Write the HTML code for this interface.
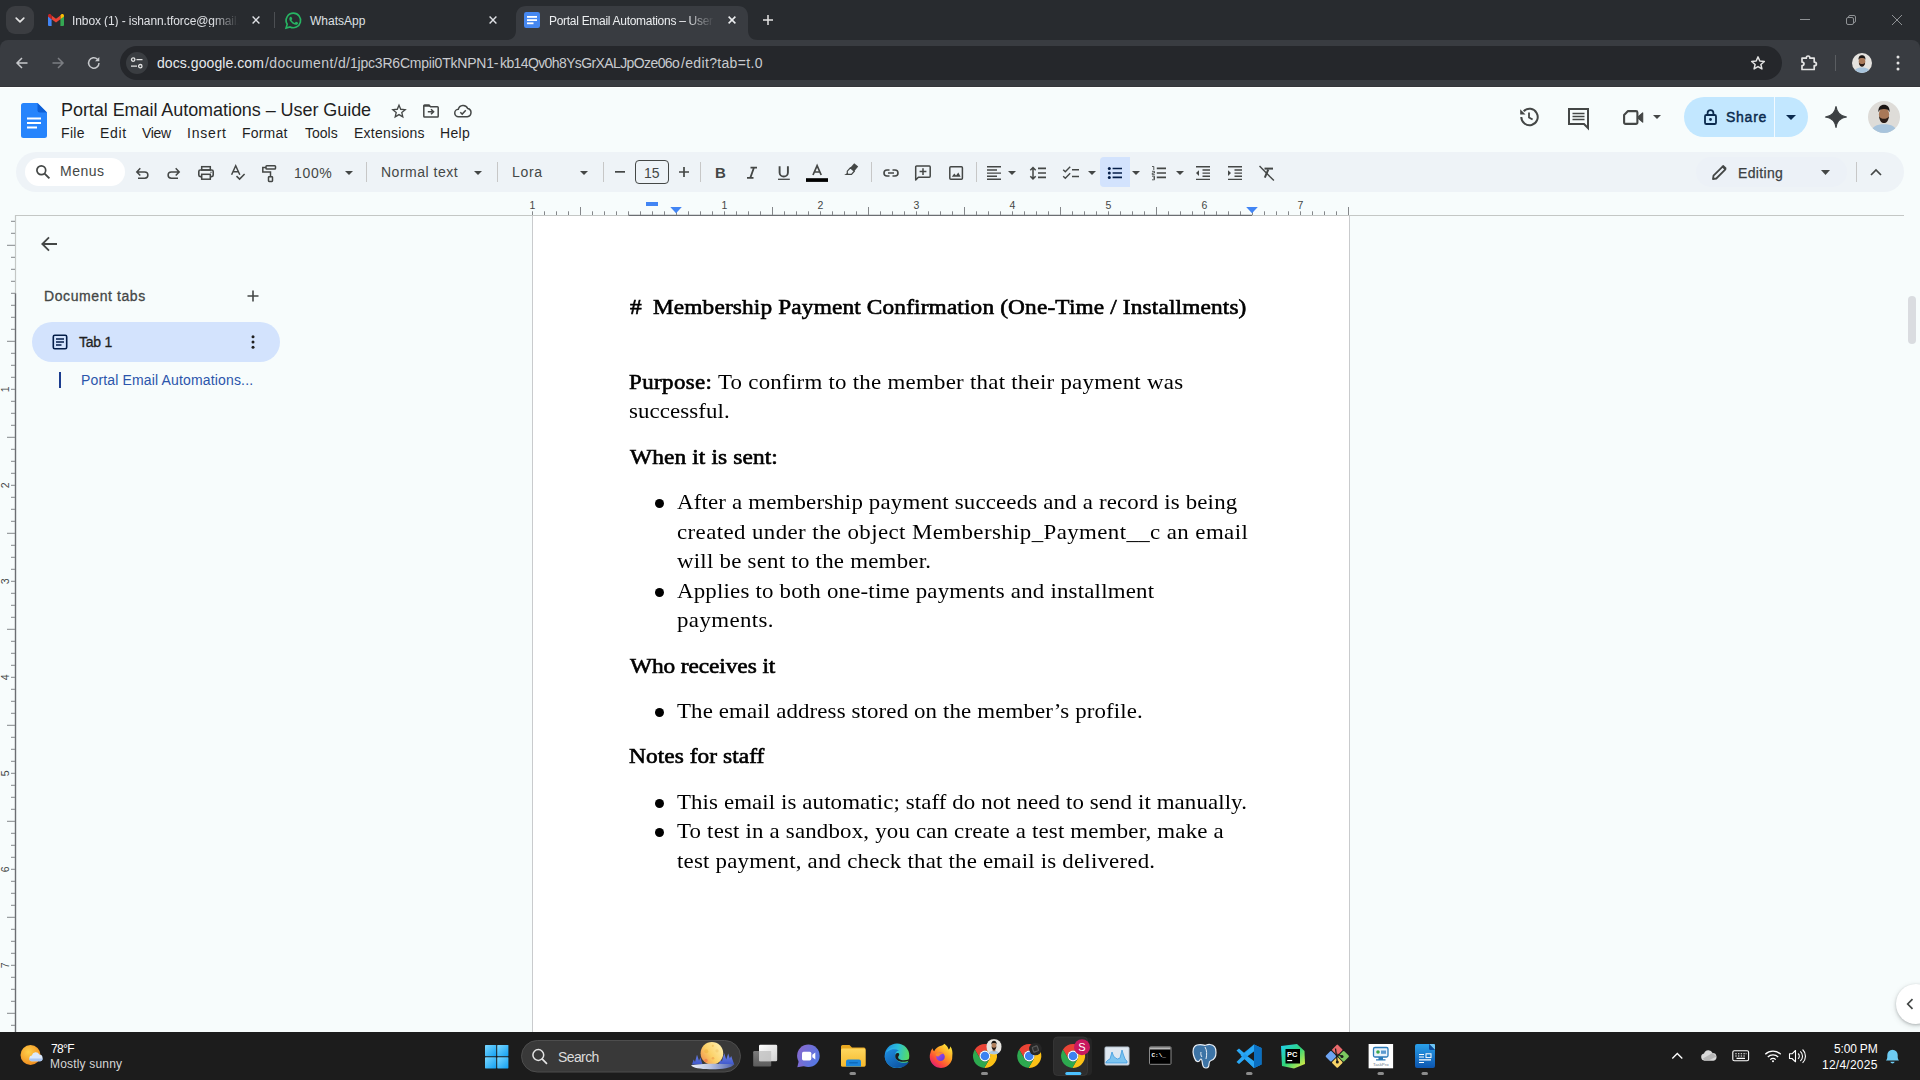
<!DOCTYPE html>
<html lang="en">
<head>
<meta charset="utf-8">
<title>Portal Email Automations – User Guide - Google Docs</title>
<style>
*{box-sizing:border-box;margin:0;padding:0}
html,body{width:1920px;height:1080px;overflow:hidden;background:#f7fcfc}
body{position:relative;font-family:"Liberation Sans",sans-serif;color:#1f1f1f}
.abs{position:absolute}
.t{position:absolute;white-space:nowrap;line-height:1}
svg{position:absolute;overflow:visible}

/* ---------- Chrome browser frame ---------- */
#tabstrip{position:absolute;left:0;top:0;width:1920px;height:52px;background:#282b2f}
#navbar{position:absolute;left:0;top:40px;width:1920px;height:47px;background:#393c41;border-bottom:1px solid #34363a;border-radius:8px 8px 0 0}
#omni{position:absolute;left:120px;top:46px;width:1662px;height:34px;border-radius:17px;background:#25272b}
.ctab{color:#e3e3e3;font-size:12px}

/* ---------- Docs ---------- */
#docs{position:absolute;left:0;top:87px;width:1920px;height:945px;background:#f7fcfc;border-top:1px solid #fff}
#tb{position:absolute;left:16px;top:152px;width:1888px;height:40px;border-radius:20px;background:#eef3f7}
.menu{font-size:14px;color:#1f1f1f}
.tbtxt{font-size:14px;color:#444746}
.sep{position:absolute;width:1px;height:20px;top:162px;background:#c7c7c7}

/* document text */
.d{position:absolute;white-space:nowrap;font-family:"Liberation Serif",serif;font-size:22px;line-height:26px;color:#000}
.d b{font-weight:400;-webkit-text-stroke:.65px #000}
.db{transform-origin:0 50%;transform:scaleX(1.06)}
.dr{transform-origin:0 50%;transform:scaleX(1.04)}
.bul{position:absolute;width:9px;height:9px;border-radius:50%;background:#000;left:654.5px}

/* ---------- Taskbar ---------- */
#taskbar{position:absolute;left:0;top:1032px;width:1920px;height:48px;background:#1c1c1c}
.tk{color:#fff;font-size:12px}
</style>
</head>
<body>

<!-- ================= CHROME ================= -->
<div id="tabstrip"></div>
<div id="navbar"></div>
<div id="omni"></div>
<!--CHROME-->

<!-- tab search -->
<div class="abs" style="left:6px;top:6px;width:28px;height:28px;border-radius:9px;background:#3b3d41"></div>
<svg style="left:14px;top:14px" width="12" height="12" viewBox="0 0 12 12"><path d="M2.2 4.2 L6 7.8 L9.8 4.2" fill="none" stroke="#e3e3e3" stroke-width="1.7" stroke-linecap="round" stroke-linejoin="round"/></svg>
<!-- gmail favicon -->
<svg style="left:48px;top:14px" width="16" height="12" viewBox="0 0 16 12"><path d="M0 1.6V11a1 1 0 0 0 1 1h2.6V5.2z" fill="#4285f4"/><path d="M12.4 12H15a1 1 0 0 0 1-1V1.6l-3.6 3.6z" fill="#34a853"/><path d="M12.4 1.4V5.2L16 2.5V1.6C16 .2 14.4-.5 13.3.3z" fill="#fbbc04"/><path d="M3.6 5.2V1.4L8 4.7l4.4-3.3v3.8L8 8.5z" fill="#ea4335"/><path d="M0 1.6v.9l3.6 2.7V1.4L2.7.3C1.6-.5 0 .2 0 1.6z" fill="#c5221f"/></svg>
<div class="t ctab" id="ct1" style="left:72px;top:15px;letter-spacing:-0.1px;color:#dfe1e5;width:167px;overflow:hidden;-webkit-mask-image:linear-gradient(90deg,#000 84%,transparent 100%);mask-image:linear-gradient(90deg,#000 84%,transparent 100%)">Inbox (1) - ishann.tforce@gmail.com - Gmail</div>
<svg style="left:252px;top:16px" width="8" height="8" viewBox="0 0 8 8"><path d="M.6.6 7.4 7.4M7.4.6.6 7.4" stroke="#dfe1e5" stroke-width="1.4" fill="none"/></svg>
<div class="abs" style="left:274px;top:12px;width:1px;height:16px;background:#4c4f53"></div>
<!-- whatsapp favicon -->
<svg style="left:285px;top:12px" width="17" height="17" viewBox="0 0 24 24"><path d="M12 1.6A10.3 10.3 0 0 0 3.1 17.2L1.5 22.6l5.6-1.5A10.3 10.3 0 1 0 12 1.6z" fill="none" stroke="#27b463" stroke-width="2.3"/><path d="M8.6 6.9c-.3-.6-.5-.6-.8-.6h-.7c-.3 0-.7.1-1 .5-.4.4-1.300 1.300-1.300 3.100s1.300 3.600 1.500 3.800c.2.300 2.600 4.100 6.400 5.600 3.100 1.200 3.800 1 4.400.9.700-.1 2.200-.9 2.500-1.800.3-.9.300-1.600.2-1.800-.1-.2-.3-.2-.7-.400l-2.500-1.200c-.400-.100-.600-.200-.900.200l-1.200 1.500c-.2.200-.4.300-.8.100-.4-.2-1.600-.6-3-1.900-1.100-1-1.900-2.200-2.100-2.600-.2-.4 0-.6.200-.8l.6-.7c.2-.2.200-.4.400-.6.100-.3 0-.5 0-.7z" fill="#27b463" transform="translate(2.2 1.6) scale(.82)"/></svg>
<div class="t ctab" id="ct2" style="top:15px;color:#dfe1e5;left:310px;letter-spacing:0px">WhatsApp</div>
<svg style="left:489px;top:16px" width="8" height="8" viewBox="0 0 8 8"><path d="M.6.6 7.4 7.4M7.4.6.6 7.4" stroke="#dfe1e5" stroke-width="1.4" fill="none"/></svg>
<!-- active tab -->
<svg style="left:506px;top:6px" width="252" height="34" viewBox="0 0 252 34"><path d="M0 34 C6 34 10 31 10 24 V10 C10 4 14 0 20 0 H232 C238 0 242 4 242 10 V24 C242 31 246 34 252 34 Z" fill="#393c41"/></svg>
<svg style="left:524px;top:12px" width="16" height="16" viewBox="0 0 16 16"><rect width="16" height="16" rx="2.2" fill="#4688f1"/><rect x="3" y="4" width="10" height="1.8" fill="#fff"/><rect x="3" y="7.2" width="10" height="1.8" fill="#fff"/><rect x="3" y="10.400" width="6.5" height="1.8" fill="#fff"/></svg>
<div class="t ctab" id="ct3" style="left:549px;top:15px;letter-spacing:-0.29px;color:#eceef0;width:167px;overflow:hidden;-webkit-mask-image:linear-gradient(90deg,#000 82%,transparent 99%);mask-image:linear-gradient(90deg,#000 82%,transparent 99%)">Portal Email Automations – User Guide - Google Docs</div>
<svg style="left:728px;top:16px" width="8" height="8" viewBox="0 0 8 8"><path d="M.6.6 7.4 7.4M7.4.6.6 7.4" stroke="#eceef0" stroke-width="1.5" fill="none"/></svg>
<svg style="left:763px;top:15px" width="10" height="10" viewBox="0 0 10 10"><path d="M5 0V10M0 5H10" stroke="#e3e3e3" stroke-width="1.5" fill="none"/></svg>
<!-- window controls -->
<svg style="left:1800px;top:19px" width="10" height="1" viewBox="0 0 10 1"><rect width="10" height="1" fill="#8f9295"/></svg>
<svg style="left:1846px;top:15px" width="10" height="10" viewBox="0 0 10 10"><rect x=".5" y="2.500" width="7" height="7" rx="1.5" fill="none" stroke="#8f9295"/><path d="M2.5 2.300V2A1.500 1.500 0 0 1 4 .5H8A1.500 1.500 0 0 1 9.500 2V6A1.500 1.500 0 0 1 8 7.500H7.700" fill="none" stroke="#8f9295"/></svg>
<svg style="left:1892px;top:15px" width="10" height="10" viewBox="0 0 10 10"><path d="M0 0 10 10M10 0 0 10" stroke="#8f9295" stroke-width="1" fill="none"/></svg>
<!-- nav buttons -->
<svg style="left:16px;top:57px" width="12" height="12" viewBox="0 0 12 12"><path d="M11.500 6H1.200M6 1 1 6l5 5" fill="none" stroke="#c7c9cc" stroke-width="1.500" stroke-linejoin="miter"/></svg>
<svg style="left:52px;top:57px" width="12" height="12" viewBox="0 0 12 12"><path d="M.5 6H10.800M6 1l5 5-5 5" fill="none" stroke="#7b7e82" stroke-width="1.500"/></svg>
<svg style="left:87px;top:56px" width="14" height="14" viewBox="0 0 14 14"><path d="M12 7A5.200 5.200 0 1 1 10.400 3.200" fill="none" stroke="#c7c9cc" stroke-width="1.500"/><path d="M12.300 1V5.300H8z" fill="#c7c9cc"/></svg>
<!-- site info -->
<div class="abs" style="left:126px;top:52px;width:22px;height:22px;border-radius:11px;background:#3a3d41"></div>
<svg style="left:130px;top:57px" width="14" height="12" viewBox="0 0 14 12"><circle cx="3.200" cy="2.600" r="1.700" fill="none" stroke="#e3e3e3" stroke-width="1.300"/><path d="M6.500 2.600H12.500M1 9.200H7" stroke="#e3e3e3" stroke-width="1.300"/><circle cx="10.300" cy="9.200" r="1.700" fill="none" stroke="#e3e3e3" stroke-width="1.300"/></svg>
<div class="t" id="url" style="left:157px;top:56px;font-size:14px"><span style="display:inline-block;letter-spacing:0.071px;color:#e8eaed;width:108px">docs.google.com</span><span style="display:inline-block;letter-spacing:0.364px;color:#c9cbcf;width:85px">/document/d/</span><span style="display:inline-block;letter-spacing:-0.211px;color:#c9cbcf;width:150px">1jpc3R6Cmpii0TkNPN1-</span><span style="display:inline-block;letter-spacing:-0.609px;color:#c9cbcf;width:181px">kb14Qv0h8YsGrXALJpOze06o</span><span style="display:inline-block;letter-spacing:0.333px;color:#c9cbcf">/edit?tab=t.0</span></div>
<!-- star -->
<svg style="left:1750px;top:55px" width="16" height="16" viewBox="0 0 24 24"><path d="M12 2.800l2.700 6.300 6.800.6-5.200 4.500 1.600 6.700L12 17.300 6.100 20.900l1.600-6.700L2.500 9.700l6.800-.6z" fill="none" stroke="#e3e3e3" stroke-width="2.200" stroke-linejoin="round"/></svg>
<!-- extensions -->
<svg style="left:1800px;top:54px" width="18" height="17" viewBox="0 0 18 17"><path d="M2 4.200H6.300C6.300 2.900 7 2 8.100 2s1.800.9 1.800 2.200H14.200V8.100C15.500 8.100 16.400 8.800 16.400 9.900s-.9 1.800-2.200 1.800V15.500H2V11.500C3.300 11.500 4 10.800 4 9.800S3.300 8.100 2 8.100z" fill="none" stroke="#e3e3e3" stroke-width="1.700" stroke-linejoin="round"/></svg>
<div class="abs" style="left:1835px;top:55px;width:1px;height:16px;background:#5a5d61"></div>
<!-- profile avatar -->
<svg style="left:1852px;top:53px" width="20" height="20" viewBox="0 0 20 20"><defs><clipPath id="av1"><circle cx="10" cy="10" r="10"/></clipPath></defs><g clip-path="url(#av1)"><rect width="20" height="20" fill="#e4e2de"/><path d="M2 20c0-4 3.500-5.500 8-5.500s8 1.500 8 5.500z" fill="#a8c4dc"/><ellipse cx="10" cy="8.500" rx="3.300" ry="4.300" fill="#a87858"/><path d="M6.500 7C6.300 3.500 8 2.300 10 2.300S13.700 3.500 13.500 7C13 5.500 12 5 10 5S7 5.500 6.500 7z" fill="#1c1614"/><path d="M6.900 9.500c.3 3 1.600 4.300 3.100 4.300s2.800-1.300 3.100-4.300c-.8 1.300-1.800 1.600-3.100 1.600S7.700 10.800 6.900 9.500z" fill="#2a1d18"/></g></svg>
<!-- kebab -->
<svg style="left:1896px;top:55px" width="4" height="16" viewBox="0 0 4 16"><circle cx="2" cy="2" r="1.500" fill="#e3e3e3"/><circle cx="2" cy="8" r="1.500" fill="#e3e3e3"/><circle cx="2" cy="14" r="1.500" fill="#e3e3e3"/></svg>


<!-- ================= DOCS ================= -->
<div id="docs"></div>
<!--DOCSHEAD-->

<!-- docs logo -->
<svg style="left:21px;top:103px" width="26" height="35" viewBox="0 0 26 35"><path d="M2.500 0H16.500L26 9.500V32.500A2.500 2.500 0 0 1 23.500 35H2.500A2.500 2.500 0 0 1 0 32.500V2.500A2.500 2.500 0 0 1 2.500 0z" fill="#2684fc"/><path d="M16.500 0 26 9.500H18.800A2.300 2.300 0 0 1 16.500 7.200z" fill="#0d5fd6"/><rect x="6" y="14.500" width="14" height="2" fill="#fff"/><rect x="6" y="19" width="14" height="2" fill="#fff"/><rect x="6" y="23.500" width="10" height="2" fill="#fff"/></svg>
<div class="t" id="title" style="top:101px;font-size:18px;color:#1f1f1f;left:61px;letter-spacing:-0.056px">Portal Email Automations – User Guide</div>
<!-- star / move / cloud -->
<svg style="left:391px;top:103px" width="16" height="16" viewBox="0 0 24 24"><path d="M12 3.200l2.600 6.200 6.700.6-5.100 4.400 1.500 6.500L12 17.400 6.300 20.900l1.500-6.500L2.700 10l6.700-.6z" fill="none" stroke="#444746" stroke-width="2" stroke-linejoin="miter"/></svg>
<svg style="left:423px;top:104px" width="16" height="14" viewBox="0 0 16 14"><path d="M1.600 1H6l1.500 1.700H14.400a.8.800 0 0 1 .8.800V12.200a.8.800 0 0 1-.8.800H1.600a.8.800 0 0 1-.8-.8V1.800A.8.800 0 0 1 1.600 1z" fill="none" stroke="#444746" stroke-width="1.500"/><path d="M.8 1H6.300L7.600 2.700H.8z" fill="#444746"/><path d="M4.800 7.800H9.500M8 5.300 10.600 7.800 8 10.300" fill="none" stroke="#444746" stroke-width="1.500"/></svg>
<svg style="left:454px;top:104px" width="18" height="14" viewBox="0 0 18 14"><path d="M4.600 12.700A3.700 3.700 0 0 1 4.300 5.300 4.900 4.900 0 0 1 13.700 4.600 4.100 4.100 0 0 1 13.300 12.700z" fill="none" stroke="#444746" stroke-width="1.500" stroke-linejoin="round"/><path d="M6.300 8.300 8.200 10.100 11.800 6.300" fill="none" stroke="#444746" stroke-width="1.500"/></svg>
<!-- menus -->
<div class="t menu" id="m1" style="top:126px;left:61px;letter-spacing:0.333px">File</div>
<div class="t menu" id="m2" style="top:126px;left:100px;letter-spacing:0.667px">Edit</div>
<div class="t menu" id="m3" style="top:126px;left:142px;letter-spacing:-0.333px">View</div>
<div class="t menu" id="m4" style="top:126px;left:187px;letter-spacing:0.8px">Insert</div>
<div class="t menu" id="m5" style="top:126px;left:242px;letter-spacing:0.2px">Format</div>
<div class="t menu" id="m6" style="top:126px;left:305px;letter-spacing:0px">Tools</div>
<div class="t menu" id="m7" style="top:126px;left:354px;letter-spacing:0.222px">Extensions</div>
<div class="t menu" id="m8" style="top:126px;left:440px;letter-spacing:0.333px">Help</div>
<!-- history -->
<svg style="left:1518px;top:106px" width="22" height="22" viewBox="0 0 22 22"><path d="M3.300 11A8.200 8.200 0 1 0 5.700 5.200" fill="none" stroke="#444746" stroke-width="2"/><path d="M2.200 3.300V8.600H7.500z" fill="#444746"/><path d="M11 6.500V11.400L14.600 13.600" fill="none" stroke="#444746" stroke-width="1.800"/></svg>
<!-- comments -->
<svg style="left:1568px;top:108px" width="21" height="21" viewBox="0 0 21 21"><path d="M1 1H20V20L16 16H1z" fill="none" stroke="#444746" stroke-width="2" stroke-linejoin="miter"/><path d="M4.500 5.500H16.500M4.500 8.500H16.500M4.500 11.500H16.500" stroke="#444746" stroke-width="1.700"/></svg>
<!-- meet -->
<svg style="left:1623px;top:110px" width="21" height="15" viewBox="0 0 21 15"><path d="M5 1.100H13A1.400 1.400 0 0 1 14.400 2.500V12.500A1.400 1.400 0 0 1 13 13.900H2.500A1.400 1.400 0 0 1 1.100 12.500V5z" fill="none" stroke="#444746" stroke-width="2.100" stroke-linejoin="round"/><path d="M15.300 6.600 19.700 2.800V12.200L15.300 8.400z" fill="#444746" stroke="#444746" stroke-width="1.100" stroke-linejoin="round"/></svg>
<svg style="left:1653px;top:115px" width="8" height="4" viewBox="0 0 8 4"><path d="M0 0H8L4 4z" fill="#444746"/></svg>
<!-- share -->
<div class="abs" style="left:1684px;top:97px;width:124px;height:40px;border-radius:20px;background:#c2e7ff"></div>
<div class="abs" style="left:1774px;top:97px;width:1px;height:40px;background:#f3faff"></div>
<svg style="left:1704px;top:109px" width="13" height="16" viewBox="0 0 13 16"><rect x="1" y="6" width="11" height="9" rx="1.300" fill="none" stroke="#0b2a4e" stroke-width="1.800"/><path d="M3.600 6V4.100A2.900 2.900 0 0 1 9.400 4.100V6" fill="none" stroke="#0b2a4e" stroke-width="1.800"/><circle cx="6.500" cy="10.500" r="1.400" fill="#0b2a4e"/></svg>
<div class="t" id="share" style="top:110px;font-size:14px;font-weight:400;-webkit-text-stroke:.45px #0b2a4e;color:#0b2a4e;left:1726px;letter-spacing:0.75px">Share</div>
<svg style="left:1786px;top:115px" width="10" height="5" viewBox="0 0 10 5"><path d="M0 0H10L5 5z" fill="#0b2a4e"/></svg>
<!-- gemini spark -->
<svg style="left:1825px;top:106px" width="22" height="22" viewBox="0 0 22 22"><path d="M11 .5C11.800 6.500 15.500 10.200 21.500 11 15.500 11.800 11.800 15.500 11 21.500 10.200 15.500 6.500 11.800 .5 11 6.500 10.200 10.200 6.500 11 .5z" fill="#3c4043" stroke="#3c4043" stroke-width="1.200" stroke-linejoin="round"/></svg>
<!-- account avatar -->
<svg style="left:1868px;top:101px" width="32" height="32" viewBox="0 0 20 20"><defs><clipPath id="av2"><circle cx="10" cy="10" r="10"/></clipPath></defs><g clip-path="url(#av2)"><rect width="20" height="20" fill="#dedcd8"/><path d="M2 20c0-4 3.500-5.500 8-5.500s8 1.500 8 5.500z" fill="#a8c4dc"/><ellipse cx="10" cy="8.500" rx="3.200" ry="4.300" fill="#a87858"/><path d="M6.500 7C6.300 3.500 8 2.300 10 2.300S13.700 3.500 13.500 7C13 5.500 12 5 10 5S7 5.500 6.500 7z" fill="#1c1614"/><path d="M6.900 9.500c.3 3 1.600 4.300 3.100 4.300s2.800-1.300 3.100-4.300c-.8 1.300-1.800 1.600-3.100 1.600S7.700 10.800 6.900 9.500z" fill="#2a1d18"/></g></svg>

<div id="tb"></div>
<!--TOOLBAR-->

<!-- menus search -->
<div class="abs" style="left:25px;top:158px;width:100px;height:28px;border-radius:14px;background:#fff"></div>
<svg style="left:35px;top:164px" width="16" height="16" viewBox="0 0 16 16"><circle cx="6.300" cy="6.300" r="4.400" fill="none" stroke="#444746" stroke-width="1.700"/><path d="M9.600 9.600 14.400 14.400" stroke="#444746" stroke-width="1.900"/></svg>
<div class="t tbtxt" id="tmenus" style="top:164px;left:60px;letter-spacing:0.5px">Menus</div>
<!-- undo / redo -->
<svg style="left:134px;top:165px" width="16" height="16" viewBox="134 165 16 16"><path d="M140.300 168.300 136.800 171.900 140.300 175.500M137 171.900H144.700A3.200 3.200 0 0 1 144.700 178.300H138" fill="none" stroke="#444746" stroke-width="1.500"/></svg>
<svg style="left:166px;top:165px" width="16" height="16" viewBox="166 165 16 16"><path d="M175.700 168.300 179.200 171.900 175.700 175.500M179 171.900H171.300A3.200 3.200 0 0 0 171.300 178.300H178" fill="none" stroke="#444746" stroke-width="1.500"/></svg>
<!-- print -->
<svg style="left:197px;top:165px" width="18" height="16" viewBox="197 165 18 16"><rect x="198.800" y="170" width="14.400" height="6.600" rx="1.600" fill="none" stroke="#444746" stroke-width="1.600"/><rect x="201.700" y="166.700" width="8.600" height="3.300" fill="none" stroke="#444746" stroke-width="1.500"/><rect x="201.700" y="174.300" width="8.600" height="4.900" fill="#eef3f7" stroke="#444746" stroke-width="1.500"/><circle cx="211" cy="172.300" r=".7" fill="#444746"/></svg>
<!-- spellcheck -->
<svg style="left:230px;top:164px" width="17" height="17" viewBox="230 164 17 17"><path d="M231.600 174.700 235.700 165.700 239.800 174.700M233.100 171.800H238.300" fill="none" stroke="#444746" stroke-width="1.500" stroke-linejoin="miter"/><path d="M236.500 176.100 239.600 179.100 244.600 174" fill="none" stroke="#444746" stroke-width="1.500"/></svg>
<!-- paint format -->
<svg style="left:261px;top:164px" width="17" height="19" viewBox="261 164 17 19"><rect x="266" y="165.700" width="9.500" height="3.300" rx=".8" fill="none" stroke="#444746" stroke-width="1.500"/><path d="M266 167.400H262.800V172H270.500V176.300" fill="none" stroke="#444746" stroke-width="1.500"/><rect x="268.500" y="176.700" width="4" height="4.700" rx=".6" fill="none" stroke="#444746" stroke-width="1.500"/></svg>
<!-- zoom -->
<div class="t tbtxt" id="tzoom" style="top:166px;left:294px;letter-spacing:0.667px">100%</div>
<svg style="left:345px;top:171px" width="8" height="4" viewBox="0 0 8 4"><path d="M0 0H8L4 4z" fill="#444746"/></svg>
<div class="sep" style="left:366px"></div>
<div class="t tbtxt" id="tstyle" style="top:165px;left:381px;letter-spacing:0.5px">Normal text</div>
<svg style="left:474px;top:171px" width="8" height="4" viewBox="0 0 8 4"><path d="M0 0H8L4 4z" fill="#444746"/></svg>
<div class="sep" style="left:497px"></div>
<div class="t tbtxt" id="tfont" style="top:165px;left:512px;letter-spacing:0.667px">Lora</div>
<svg style="left:580px;top:171px" width="8" height="4" viewBox="0 0 8 4"><path d="M0 0H8L4 4z" fill="#444746"/></svg>
<div class="sep" style="left:603px"></div>
<!-- font size -->
<svg style="left:615px;top:171px" width="10" height="2" viewBox="0 0 10 2"><rect width="10" height="1.700" fill="#444746"/></svg>
<div class="abs" style="left:635px;top:160px;width:34px;height:24px;border:1px solid #444746;border-radius:4px"></div>
<div class="t tbtxt" id="tsize" style="top:166px;left:644px;letter-spacing:0px">15</div>
<svg style="left:679px;top:167px" width="10" height="10" viewBox="0 0 10 10"><path d="M5 0V10M0 5H10" stroke="#444746" stroke-width="1.700" fill="none"/></svg>
<div class="sep" style="left:700px"></div>
<!-- B I U A -->
<div class="t" id="tB" style="top:165px;font-size:15px;font-weight:700;color:#444746;left:715px;letter-spacing:0">B</div>
<svg style="left:746px;top:166px" width="12" height="14" viewBox="746 166 12 14"><path d="M750.500 167.700H757M747 177.900H753.500M753.900 167.700 750.300 177.900" fill="none" stroke="#444746" stroke-width="1.800"/></svg>
<svg style="left:777px;top:165px" width="14" height="16" viewBox="777 165 14 16"><path d="M779.600 166.300V172.400A4.100 4.100 0 0 0 787.900 172.400V166.300" fill="none" stroke="#444746" stroke-width="1.900"/><path d="M778 179.300H789.800" stroke="#444746" stroke-width="1.300"/></svg>
<svg style="left:805px;top:164px" width="24" height="19" viewBox="805 164 24 19"><path d="M813 175 817.100 165.600 821.200 175M814.500 172H819.700" fill="none" stroke="#444746" stroke-width="1.700"/><rect x="806" y="178.200" width="22" height="3.700" fill="#000"/></svg>
<!-- highlighter -->
<svg style="left:843px;top:162px" width="17" height="15" viewBox="843 162 17 15"><path d="M854.200 163.200 858.200 166.600 854.300 171.200 850.300 167.800z" fill="#444746"/><path d="M850.300 167.800 854.300 171.200 851.500 174.400H848.200L847.300 173.600V171.200z" fill="none" stroke="#444746" stroke-width="1.200"/><path d="M847.300 173 844.200 175H849.300z" fill="#444746"/></svg>
<div class="sep" style="left:871px"></div>
<!-- link -->
<svg style="left:882px;top:168px" width="18" height="10" viewBox="882 168 18 10"><path d="M889.500 170H887A3 3 0 0 0 887 176H889.500M892.500 170H895A3 3 0 0 1 895 176H892.500M888 173H894" fill="none" stroke="#444746" stroke-width="1.600"/></svg>
<!-- add comment -->
<svg style="left:914px;top:164px" width="18" height="18" viewBox="914 164 18 18"><path d="M916.600 166H929.300A.9.900 0 0 1 930.200 166.900V176.300A.9.900 0 0 1 929.300 177.200H918.400L915.700 179.900V166.900A.9.900 0 0 1 916.600 166z" fill="none" stroke="#444746" stroke-width="1.500" stroke-linejoin="round"/><path d="M923 168.300V175M919.600 171.600H926.400" stroke="#444746" stroke-width="1.500"/></svg>
<!-- image -->
<svg style="left:948px;top:165px" width="16" height="16" viewBox="948 165 16 16"><rect x="949.800" y="166.700" width="12.600" height="12.600" rx="1" fill="none" stroke="#444746" stroke-width="1.500"/><path d="M951.800 176.700 954.300 173.500 956 175.500 958.300 172.500 960.600 176.700z" fill="#444746"/></svg>
<div class="sep" style="left:976px"></div>
<!-- align -->
<svg style="left:986px;top:165px" width="16" height="16" viewBox="986 165 16 16"><path d="M987 166.800H1001M987 170H997M987 173.100H1001M987 176.200H997M987 179.300H1001" stroke="#444746" stroke-width="1.400"/></svg>
<svg style="left:1008px;top:171px" width="8" height="4" viewBox="0 0 8 4"><path d="M0 0H8L4 4z" fill="#444746"/></svg>
<!-- line spacing -->
<svg style="left:1029px;top:166px" width="18" height="14" viewBox="1029 166 18 14"><path d="M1033 168.300V178M1030.300 170.200 1033 167.500 1035.700 170.200M1030.300 176.200 1033 178.900 1035.700 176.200" fill="none" stroke="#444746" stroke-width="1.500"/><path d="M1038 168.400H1046M1038 173H1046M1038 177.400H1046" stroke="#444746" stroke-width="1.600"/></svg>
<!-- checklist -->
<svg style="left:1062px;top:165px" width="18" height="15" viewBox="1062 165 18 15"><path d="M1063.200 169.700 1065.300 171.700 1070.200 166.800M1063.200 176.200 1065.300 178.200 1070.200 173.300" fill="none" stroke="#444746" stroke-width="1.400"/><path d="M1072 169.800H1079M1072 176.400H1079" stroke="#444746" stroke-width="1.500"/></svg>
<svg style="left:1088px;top:171px" width="8" height="4" viewBox="0 0 8 4"><path d="M0 0H8L4 4z" fill="#444746"/></svg>
<!-- bulleted list (active) -->
<div class="abs" style="left:1100px;top:157px;width:30px;height:30px;border-radius:4px 0 0 4px;background:#d3e3fd"></div>
<svg style="left:1107px;top:166px" width="16" height="14" viewBox="1107 166 16 14"><circle cx="1109.300" cy="168.500" r="1.500" fill="#041e49"/><circle cx="1109.300" cy="173" r="1.500" fill="#041e49"/><circle cx="1109.300" cy="177.400" r="1.500" fill="#041e49"/><path d="M1112.600 168.500H1122M1112.600 173H1122M1112.600 177.400H1122" stroke="#041e49" stroke-width="1.600"/></svg>
<svg style="left:1132px;top:171px" width="8" height="4" viewBox="0 0 8 4"><path d="M0 0H8L4 4z" fill="#444746"/></svg>
<!-- numbered list -->
<svg style="left:1151px;top:165px" width="16" height="16" viewBox="1151 165 16 16"><path d="M1156.800 168.400H1166M1156.800 173H1166M1156.800 177.400H1166" stroke="#444746" stroke-width="1.600"/><path d="M1152 166.500H1153.800V170M1152 171.300H1154.500V173H1152.300V174.700H1154.800M1152 176.200H1154.500V179.800H1152M1153 178H1154.500" fill="none" stroke="#444746" stroke-width=".9"/></svg>
<svg style="left:1176px;top:171px" width="8" height="4" viewBox="0 0 8 4"><path d="M0 0H8L4 4z" fill="#444746"/></svg>
<!-- indent less / more -->
<svg style="left:1195px;top:165px" width="16" height="16" viewBox="1195 165 16 16"><path d="M1196 166.700H1210M1202.500 170H1210M1202.500 173.100H1210M1202.500 176.200H1210M1196 179.400H1210" stroke="#444746" stroke-width="1.400"/><path d="M1199 170.300V176L1196 173.100z" fill="#444746"/></svg>
<svg style="left:1227px;top:165px" width="16" height="16" viewBox="1227 165 16 16"><path d="M1228 166.700H1242M1234.500 170H1242M1234.500 173.100H1242M1234.500 176.200H1242M1228 179.400H1242" stroke="#444746" stroke-width="1.400"/><path d="M1228 170.300V176L1231 173.100z" fill="#444746"/></svg>
<!-- clear formatting -->
<svg style="left:1258px;top:165px" width="17" height="17" viewBox="1258 165 17 17"><path d="M1264.500 168.600H1273" stroke="#444746" stroke-width="2"/><path d="M1268.300 169.500 1264.800 177.600" stroke="#444746" stroke-width="2"/><path d="M1259.500 166 1273.900 180.600" stroke="#444746" stroke-width="1.400"/></svg>
<!-- editing -->
<div class="abs" style="left:1696px;top:157px;width:151px;height:30px;border-radius:15px;background:#ecf1f7"></div>
<svg style="left:1711px;top:164px" width="16" height="16" viewBox="1711 164 16 16"><path d="M1713 179 1713.500 175.700 1722.600 166.600 1725.400 169.400 1716.300 178.500z" fill="none" stroke="#444746" stroke-width="1.800" stroke-linejoin="round"/><path d="M1721.600 165.900 1723.500 164.900 1726.600 168 1725.700 169.800z" fill="#444746"/></svg>
<div class="t tbtxt" id="tedit" style="top:166px;-webkit-text-stroke:.25px #3c4043;color:#3c4043;left:1738px;letter-spacing:0.334px">Editing</div>
<svg style="left:1821px;top:170px" width="9" height="5" viewBox="0 0 9 5"><path d="M0 0H9L4.500 5z" fill="#444746"/></svg>
<div class="sep" style="left:1856px"></div>
<svg style="left:1870px;top:168px" width="12" height="8" viewBox="0 0 12 8"><path d="M1 7 6 2 11 7" fill="none" stroke="#444746" stroke-width="1.700"/></svg>

<!--RULER-->
<svg style="left:0;top:195px" width="1920" height="24" viewBox="0 195 1920 24">
<path d="M15 215.500H1904" stroke="#c4c7c5" stroke-width="1.200"/>
<path d="M628.500 215.500H1252" stroke="#6b6e72" stroke-width="1.600"/>
<path d="M532.5 211.300V215M544.5 211.300V215M556.5 211.300V215M568.5 211.300V215M592.5 211.300V215M604.5 211.300V215M616.5 211.300V215M628.5 211.300V215M640.5 211.300V215M652.5 211.300V215M664.5 211.300V215M688.5 211.300V215M700.5 211.300V215M712.5 211.300V215M724.5 211.300V215M736.5 211.300V215M748.5 211.300V215M760.5 211.300V215M784.5 211.300V215M796.5 211.300V215M808.5 211.300V215M820.5 211.300V215M832.5 211.300V215M844.5 211.300V215M856.5 211.300V215M880.5 211.300V215M892.5 211.300V215M904.5 211.300V215M916.5 211.300V215M928.5 211.300V215M940.5 211.300V215M952.5 211.300V215M976.5 211.300V215M988.5 211.300V215M1000.5 211.300V215M1012.5 211.300V215M1024.5 211.300V215M1036.5 211.300V215M1048.5 211.300V215M1072.5 211.300V215M1084.5 211.300V215M1096.5 211.300V215M1108.5 211.300V215M1120.5 211.300V215M1132.5 211.300V215M1144.5 211.300V215M1168.5 211.300V215M1180.5 211.300V215M1192.5 211.300V215M1204.5 211.300V215M1216.5 211.300V215M1228.5 211.300V215M1240.5 211.300V215M1264.5 211.300V215M1276.5 211.300V215M1288.5 211.300V215M1300.5 211.300V215M1312.5 211.300V215M1324.5 211.300V215M1336.5 211.300V215" stroke="#84878a" stroke-width="1"/>
<path d="M580.5 207V215M676.5 207V215M772.5 207V215M868.5 207V215M964.5 207V215M1060.5 207V215M1156.5 207V215M1252.5 207V215M1348.5 207V215" stroke="#84878a" stroke-width="1"/>
<rect x="646" y="202" width="12" height="4" fill="#4285f4"/>
<path d="M670.300 207H681.800L676.050 213.300z" fill="#4285f4"/>
<path d="M1246.200 207H1257.800L1252 213.300z" fill="#4285f4"/>
<text x="532.5" y="209" font-family="Liberation Sans,sans-serif" font-size="10.500" fill="#444746" text-anchor="middle">1</text>
<text x="724.5" y="209" font-family="Liberation Sans,sans-serif" font-size="10.500" fill="#444746" text-anchor="middle">1</text>
<text x="820.5" y="209" font-family="Liberation Sans,sans-serif" font-size="10.500" fill="#444746" text-anchor="middle">2</text>
<text x="916.5" y="209" font-family="Liberation Sans,sans-serif" font-size="10.500" fill="#444746" text-anchor="middle">3</text>
<text x="1012.5" y="209" font-family="Liberation Sans,sans-serif" font-size="10.500" fill="#444746" text-anchor="middle">4</text>
<text x="1108.5" y="209" font-family="Liberation Sans,sans-serif" font-size="10.500" fill="#444746" text-anchor="middle">5</text>
<text x="1204.5" y="209" font-family="Liberation Sans,sans-serif" font-size="10.500" fill="#444746" text-anchor="middle">6</text>
<text x="1300.5" y="209" font-family="Liberation Sans,sans-serif" font-size="10.500" fill="#444746" text-anchor="middle">7</text>
</svg>
<svg style="left:0;top:215px" width="17" height="817" viewBox="0 215 17 817">
<path d="M15.500 215V293.300" stroke="#c4c7c5" stroke-width="1.200"/>
<path d="M15.500 293.300V1032" stroke="#6b6e72" stroke-width="1.400"/>
<path d="M11 221.3H15M11 233.3H15M11 257.3H15M11 269.3H15M11 281.3H15M11 293.3H15M11 305.3H15M11 317.3H15M11 329.3H15M11 353.3H15M11 365.3H15M11 377.3H15M11 389.3H15M11 401.3H15M11 413.3H15M11 425.3H15M11 449.3H15M11 461.3H15M11 473.3H15M11 485.3H15M11 497.3H15M11 509.3H15M11 521.3H15M11 545.3H15M11 557.3H15M11 569.3H15M11 581.3H15M11 593.3H15M11 605.3H15M11 617.3H15M11 641.3H15M11 653.3H15M11 665.3H15M11 677.3H15M11 689.3H15M11 701.3H15M11 713.3H15M11 737.3H15M11 749.3H15M11 761.3H15M11 773.3H15M11 785.3H15M11 797.3H15M11 809.3H15M11 833.3H15M11 845.3H15M11 857.3H15M11 869.3H15M11 881.3H15M11 893.3H15M11 905.3H15M11 929.3H15M11 941.3H15M11 953.3H15M11 965.3H15M11 977.3H15M11 989.3H15M11 1001.3H15M11 1025.3H15" stroke="#84878a" stroke-width="1"/>
<path d="M7 245.3H15M7 341.3H15M7 437.3H15M7 533.3H15M7 629.3H15M7 725.3H15M7 821.3H15M7 917.3H15M7 1013.3H15" stroke="#84878a" stroke-width="1"/>
<text transform="translate(9 389.3) rotate(-90)" font-family="Liberation Sans,sans-serif" font-size="10.500" fill="#444746" text-anchor="middle">1</text>
<text transform="translate(9 485.3) rotate(-90)" font-family="Liberation Sans,sans-serif" font-size="10.500" fill="#444746" text-anchor="middle">2</text>
<text transform="translate(9 581.3) rotate(-90)" font-family="Liberation Sans,sans-serif" font-size="10.500" fill="#444746" text-anchor="middle">3</text>
<text transform="translate(9 677.3) rotate(-90)" font-family="Liberation Sans,sans-serif" font-size="10.500" fill="#444746" text-anchor="middle">4</text>
<text transform="translate(9 773.3) rotate(-90)" font-family="Liberation Sans,sans-serif" font-size="10.500" fill="#444746" text-anchor="middle">5</text>
<text transform="translate(9 869.3) rotate(-90)" font-family="Liberation Sans,sans-serif" font-size="10.500" fill="#444746" text-anchor="middle">6</text>
<text transform="translate(9 965.3) rotate(-90)" font-family="Liberation Sans,sans-serif" font-size="10.500" fill="#444746" text-anchor="middle">7</text>
</svg>
<!--SIDEBAR-->

<svg style="left:40px;top:236px" width="18" height="16" viewBox="40 236 18 16"><path d="M57 244H42.500M49 237.300 42.300 244 49 250.700" fill="none" stroke="#444746" stroke-width="1.800"/></svg>
<div class="t" id="sdt" style="top:289px;font-size:14px;color:#444746;-webkit-text-stroke:.3px #444746;font-weight:400;left:44px;letter-spacing:0.584px">Document tabs</div>
<svg style="left:247px;top:290px" width="12" height="12" viewBox="0 0 12 12"><path d="M6 .5V11.500M.5 6H11.500" stroke="#444746" stroke-width="1.600"/></svg>
<div class="abs" style="left:32px;top:322px;width:248px;height:40px;border-radius:20px;background:#d3e3fd"></div>
<svg style="left:52px;top:334px" width="16" height="16" viewBox="0 0 16 16"><rect x="1.300" y="1.300" width="13.400" height="13.400" rx="1.500" fill="none" stroke="#041e49" stroke-width="1.600"/><path d="M4 5H12M4 8H12M4 11H9.500" stroke="#041e49" stroke-width="1.500"/></svg>
<div class="t" id="stab" style="top:335px;font-size:14px;color:#1f1f1f;-webkit-text-stroke:.3px #1f1f1f;font-weight:400;left:79px;letter-spacing:-0.25px">Tab 1</div>
<svg style="left:251px;top:335px" width="4" height="14" viewBox="0 0 4 14"><circle cx="2" cy="1.700" r="1.500" fill="#1f1f1f"/><circle cx="2" cy="7" r="1.500" fill="#1f1f1f"/><circle cx="2" cy="12.300" r="1.500" fill="#1f1f1f"/></svg>
<div class="abs" style="left:59px;top:372px;width:2px;height:16px;background:#1c3d8f"></div>
<div class="t" id="sout" style="top:373px;font-size:14px;color:#2b55ab;left:81px;letter-spacing:0.154px">Portal Email Automations...</div>
<!-- scrollbar thumb & side panel toggle -->
<div class="abs" style="left:1908px;top:296px;width:8px;height:48px;border-radius:4px;background:#dadce0"></div>
<div class="abs" style="left:1896px;top:984px;width:40px;height:40px;border-radius:20px;background:#fff;box-shadow:0 1px 3px rgba(60,64,67,.3),0 2px 6px rgba(60,64,67,.15)"></div>
<svg style="left:1906px;top:998px" width="8" height="12" viewBox="0 0 8 12"><path d="M6.500 1.200 1.700 6l4.800 4.800" fill="none" stroke="#444746" stroke-width="1.700"/></svg>

<!--PAGE-->
<div class="abs" style="left:532px;top:216px;width:818px;height:816px;background:#fff;border-left:1px solid #c9cbcd;border-right:1px solid #c9cbcd"></div>
<div class="d db" id="l1" style="top:294px;left:630px;letter-spacing:0.137px"><b><span style="letter-spacing:5px">#</span> Membership Payment Confirmation (One-Time / Installments)</b></div>
<div class="d dr" id="l2" style="top:369px;left:629px;letter-spacing:0.246px"><b id="l2b" style="letter-spacing:0.397px">Purpose:</b> To confirm to the member that their payment was</div>
<div class="d dr" id="l3" style="top:398px;left:629px;letter-spacing:0.1px">successful.</div>
<div class="d db" id="l4" style="top:444px;left:630px;letter-spacing:0.133px"><b>When it is sent:</b></div>
<div class="bul" style="top:588px"></div>
<div class="d dr" id="l5" style="top:489px;left:677px;letter-spacing:0.161px">After a membership payment succeeds and a record is being</div>
<div class="d dr" id="l6" style="top:519px;left:677px;letter-spacing:0.389px">created under the object Membership_Payment__c an email</div>
<div class="d dr" id="l7" style="top:548px;left:677px;letter-spacing:0.23px">will be sent to the member.</div>
<div class="bul" style="top:499px"></div>
<div class="d dr" id="l8" style="top:578px;left:677px;letter-spacing:0.187px">Applies to both one-time payments and installment</div>
<div class="d dr" id="l9" style="top:607px;left:677px;letter-spacing:0.375px">payments.</div>
<div class="d db" id="l10" style="top:653px;left:630px;letter-spacing:-0.072px"><b>Who receives it</b></div>
<div class="bul" style="top:708px"></div>
<div class="d dr" id="l11" style="top:698px;left:677px;letter-spacing:0.125px">The email address stored on the member’s profile.</div>
<div class="d db" id="l12" style="top:743px;left:629px;letter-spacing:0.072px"><b>Notes for staff</b></div>
<div class="bul" style="top:799px"></div>
<div class="d dr" id="l13" style="top:789px;left:677px;letter-spacing:0.097px">This email is automatic; staff do not need to send it manually.</div>
<div class="bul" style="top:828px"></div>
<div class="d dr" id="l14" style="top:818px;left:677px;letter-spacing:0.176px">To test in a sandbox, you can create a test member, make a</div>
<div class="d dr" id="l15" style="top:848px;left:677px;letter-spacing:0.196px">test payment, and check that the email is delivered.</div>


<!-- ================= TASKBAR ================= -->
<div id="taskbar"></div>
<!--TASKBAR-->
<svg style="left:0;top:1032px" width="1920" height="48" viewBox="0 1032 1920 48">
<defs>
<radialGradient id="sun" cx=".4" cy=".35" r=".7"><stop offset="0" stop-color="#ffd04a"/><stop offset="1" stop-color="#f08a1c"/></radialGradient>
<linearGradient id="win" x1="0" y1="0" x2="1" y2="1"><stop offset="0" stop-color="#7ad7ff"/><stop offset="1" stop-color="#12a0f2"/></linearGradient>
<linearGradient id="moon" x1="1" y1=".2" x2="0" y2=".9"><stop offset="0" stop-color="#fff0b0"/><stop offset=".55" stop-color="#fbd066"/><stop offset="1" stop-color="#f08a4a"/></linearGradient>
<linearGradient id="gnd" x1="0" y1="0" x2="1" y2="0"><stop offset="0" stop-color="#eef1f8"/><stop offset=".45" stop-color="#b9c4e2"/><stop offset="1" stop-color="#4a5fae"/></linearGradient>
<linearGradient id="tree" x1="0" y1="0" x2="0" y2="1"><stop offset="0" stop-color="#6f86e8"/><stop offset="1" stop-color="#3f58cc"/></linearGradient>
<linearGradient id="tv" x1="0" y1="0" x2="1" y2="1"><stop offset="0" stop-color="#ffffff"/><stop offset="1" stop-color="#d0d0d0"/></linearGradient>
<linearGradient id="tvb" x1="0" y1="0" x2="0" y2="1"><stop offset="0" stop-color="#7c7c7c"/><stop offset="1" stop-color="#5c5c5c"/></linearGradient>
<linearGradient id="chat" x1="0" y1="0" x2="1" y2=".6"><stop offset="0" stop-color="#8d68cc"/><stop offset="1" stop-color="#5577e2"/></linearGradient>
<linearGradient id="fold" x1="0" y1="0" x2="0" y2="1"><stop offset="0" stop-color="#ffd75e"/><stop offset="1" stop-color="#f5b92e"/></linearGradient>
<linearGradient id="edge" x1="0" y1=".3" x2="1" y2=".5"><stop offset="0" stop-color="#1d8fe6"/><stop offset=".5" stop-color="#2bbfd8"/><stop offset="1" stop-color="#5ade5a"/></linearGradient>
<linearGradient id="edge2" x1="0" y1="0" x2=".8" y2="1"><stop offset="0" stop-color="#1f8fe2"/><stop offset="1" stop-color="#0c4e9c"/></linearGradient>
<linearGradient id="ff" x1=".85" y1=".1" x2=".2" y2=".95"><stop offset="0" stop-color="#ffe43a"/><stop offset=".4" stop-color="#ff9a22"/><stop offset=".75" stop-color="#ff4a3a"/><stop offset="1" stop-color="#e01e78"/></linearGradient>
<linearGradient id="ffg" x1="0" y1="0" x2="1" y2="1"><stop offset="0" stop-color="#b04ae8"/><stop offset="1" stop-color="#5a3ad8"/></linearGradient>
<linearGradient id="pyc" x1="0" y1="0" x2="1" y2="1"><stop offset="0" stop-color="#21d0f5"/><stop offset=".5" stop-color="#2fd47a"/><stop offset="1" stop-color="#f6ee3a"/></linearGradient>
<linearGradient id="lo" x1="0" y1="0" x2="0" y2="1"><stop offset="0" stop-color="#2aa0ea"/><stop offset="1" stop-color="#0d56b0"/></linearGradient>
</defs>
<circle cx="30.500" cy="1055" r="10" fill="url(#sun)"/>
<path d="M31.500 1061.300A3 3 0 0 1 31.800 1055.400 4 4 0 0 1 39.300 1054.600 3.400 3.400 0 0 1 40 1061.300z" fill="#dce9fb"/><path d="M31 1061.300H40.500A3 3 0 0 0 42.800 1058.500H29A3 3 0 0 0 31 1061.300z" fill="#a9c6f2"/>
<rect x="485" y="1045" width="11.200" height="11.200" rx=".6" fill="url(#win)"/>
<rect x="497.2" y="1045" width="11.200" height="11.200" rx=".6" fill="url(#win)"/>
<rect x="485" y="1057.2" width="11.200" height="11.200" rx=".6" fill="url(#win)"/>
<rect x="497.2" y="1057.2" width="11.200" height="11.200" rx=".6" fill="url(#win)"/>
<rect x="521.500" y="1040.500" width="219" height="31.500" rx="15.750" fill="#393939" stroke="#4d4d4d" stroke-width="1"/>
<circle cx="538.300" cy="1055" r="5.400" fill="none" stroke="#e4e4e4" stroke-width="1.500"/><path d="M542.300 1059.200 546.500 1063.400" stroke="#e4e4e4" stroke-width="1.700" stroke-linecap="round"/>
<path d="M692 1064.400l1.700-5 1.300 2.600 2-7.200 2 6 1.400-3.200 2.200 6.800zM718.700 1064.400l1.800-5.500 1.400 2.500 2.300-8.200 2 6.200 2-5.800 1.600 4.800 1.400-2.400 3 8.400z" fill="url(#tree)"/>
<circle cx="711.900" cy="1053.300" r="11.300" fill="url(#moon)"/><circle cx="706.300" cy="1051.200" r="2" fill="#eeb040" opacity=".55"/><circle cx="717" cy="1050.800" r="1.600" fill="#f3c86a" opacity=".6"/><circle cx="712.800" cy="1045.800" r="1.100" fill="#eeb040" opacity=".5"/><circle cx="713" cy="1058.200" r="1.300" fill="#ee9a4a" opacity=".6"/><circle cx="706" cy="1060.500" r="1.700" fill="#ea6a4a" opacity=".55"/>
<path d="M691 1065.300C699 1063.600 712 1063.200 734.300 1064.200 731 1068.300 722 1069.300 710 1069.200 700 1069.100 693 1068 691 1065.300z" fill="url(#gnd)"/>
<rect x="753.200" y="1051" width="18" height="15.600" rx="1.300" fill="url(#tvb)"/><rect x="759" y="1044.800" width="18.200" height="16.400" rx="1.300" fill="url(#tv)"/><rect x="759" y="1051" width="12.200" height="10.200" fill="#bdbdbd" opacity=".75"/>
<circle cx="808.400" cy="1055.700" r="11.300" fill="url(#chat)"/><path d="M798.800 1061 797.300 1067.300 805 1066z" fill="#7a6cd4"/><rect x="802" y="1051.700" width="9.300" height="8.700" rx="1.600" fill="#fff"/><path d="M812.300 1054.800 815.300 1052.600V1059.500L812.300 1057.300z" fill="#fff"/>
<path d="M841 1046.500A1.500 1.500 0 0 1 842.500 1045H849.500L852 1047.500H864A1.500 1.500 0 0 1 865.500 1049V1065A1.500 1.500 0 0 1 864 1066.500H842.500A1.500 1.500 0 0 1 841 1065z" fill="#e9a820"/><rect x="841" y="1048.500" width="24.500" height="18" rx="1.500" fill="url(#fold)"/><path d="M846 1066.500V1061.500A2 2 0 0 1 848 1059.500H859A2 2 0 0 1 861 1061.500V1066.500z" fill="#1b86dc"/><rect x="849" y="1062" width="9" height="1.600" rx=".8" fill="#0f6cbd"/>
<rect x="849.5" y="1072" width="6.5" height="3" rx="1.500" fill="#8c8c8c"/>
<circle cx="897" cy="1055.700" r="12.300" fill="url(#edge)"/>
<path d="M884.700 1056.500A12.300 12.300 0 0 0 897 1068C903 1068 907 1065.300 909 1061.800 903.500 1064.300 896.300 1062.300 895.200 1056.800 894.600 1052.800 896.800 1050.800 899 1050.500 893.500 1047.800 886 1049.800 884.700 1056.500z" fill="url(#edge2)"/>
<path d="M886 1052.500C888 1048 893 1046.500 898 1048.200 895 1048 890 1049.500 886 1052.500z" fill="#35b8ee" opacity=".6"/>
<path d="M895.300 1055.200C895.600 1053.300 897.300 1052.600 898.600 1053.300 899.600 1053.900 899.300 1055.200 898.600 1056 897.900 1056.900 898 1058 899 1058.900 901.500 1060.800 905.800 1060.600 909.300 1059.200L909.200 1060.400C905 1062.400 899.500 1062.300 896.800 1059.800 895.500 1058.600 895.100 1056.800 895.300 1055.200z" fill="#1c1c1c"/>
<path d="M941 1045.800C942.500 1045.500 943.500 1044.800 944.300 1043.800 946.500 1045.300 948 1047.300 948.600 1049.500 949.800 1048.800 950.300 1047.500 950.200 1046.200 952.300 1048.800 952.800 1052.300 952.300 1056A11.300 11.300 0 1 1 930.500 1052.500C930.800 1050.800 931.500 1049.300 932.800 1048.200 932.800 1049.500 933.300 1050.500 934.200 1051.200 935.500 1048.500 938 1046.500 941 1045.800z" fill="url(#ff)"/>
<circle cx="940.500" cy="1056.800" r="4.300" fill="url(#ffg)"/><path d="M935.600 1054.800C937.500 1052.300 941.500 1051.800 944 1053.800 942 1053.600 940.500 1054.300 939.600 1055.600 938.700 1056.900 936.500 1056.800 935.600 1054.800z" fill="#ff8a2a"/>
<g><path d="M980.22 1058.70L974.87 1049.42A12 12 0 0 1 995.62 1050.60L984.90 1050.60A5.4 5.4 0 0 0 980.22 1058.70z" fill="#ea4335"/><path d="M984.90 1050.60L995.62 1050.60A12 12 0 0 1 984.22 1067.98L989.58 1058.70A5.4 5.4 0 0 0 984.90 1050.60z" fill="#fbc116"/><path d="M989.58 1058.70L984.22 1067.98A12 12 0 0 1 974.87 1049.42L980.22 1058.70A5.4 5.4 0 0 0 989.58 1058.70z" fill="#2da94f"/><circle cx="984.9" cy="1056" r="5.4" fill="#fff"/><circle cx="984.9" cy="1056" r="4.3" fill="#3b82f0"/></g>
<g transform="translate(986.3 1039.1) scale(0.77)"><defs><clipPath id="av3"><circle cx="10" cy="10" r="10"/></clipPath></defs><g clip-path="url(#av3)"><rect width="20" height="20" fill="#e6e4e0"/><path d="M3 20c0-3.500 3-5 7-5s7 1.500 7 5z" fill="#a9c6de"/><path d="M8.300 12.500h3.400v3.300h-3.400z" fill="#9a6c4e"/><ellipse cx="10" cy="8.700" rx="3.100" ry="4.100" fill="#b07f5c"/><path d="M6.600 7.600C6.200 3.800 7.900 2.200 10 2.200S13.800 3.800 13.400 7.600C13 5.800 12.200 5.200 10 5.200S7 5.800 6.600 7.600z" fill="#17120f"/><path d="M6.900 9.300c.2 3.200 1.500 4.700 3.100 4.700s2.900-1.500 3.100-4.700c-.7 1.500-1.700 1.900-3.100 1.900S7.600 10.800 6.900 9.300z" fill="#231814"/></g></g>
<rect x="981" y="1072" width="7" height="3" rx="1.500" fill="#8c8c8c"/>
<g><path d="M1024.52 1058.70L1019.17 1049.42A12 12 0 0 1 1039.92 1050.60L1029.20 1050.60A5.4 5.4 0 0 0 1024.52 1058.70z" fill="#ea4335"/><path d="M1029.20 1050.60L1039.92 1050.60A12 12 0 0 1 1028.52 1067.98L1033.88 1058.70A5.4 5.4 0 0 0 1029.20 1050.60z" fill="#fbc116"/><path d="M1033.88 1058.70L1028.52 1067.98A12 12 0 0 1 1019.17 1049.42L1024.52 1058.70A5.4 5.4 0 0 0 1033.88 1058.70z" fill="#2da94f"/><circle cx="1029.2" cy="1056" r="5.4" fill="#fff"/><circle cx="1029.2" cy="1056" r="4.3" fill="#3b82f0"/></g>
<circle cx="1035.400" cy="1049" r="6.300" fill="#262626"/><rect x="1032.200" y="1045.800" width="6.400" height="6.400" rx="1.300" fill="#5a5a5a" transform="rotate(-20 1035.400 1049)"/><rect x="1033.400" y="1047" width="4" height="4" rx=".6" fill="#2e2e2e" transform="rotate(-20 1035.400 1049)"/>
<rect x="1056" y="1037.500" width="36" height="38" rx="4" fill="#252525"/><rect x="1053.500" y="1037" width="34" height="38.500" rx="4" fill="#2d2d2d" stroke="#383838" stroke-width=".8"/>
<g><path d="M1068.32 1058.70L1062.97 1049.42A12 12 0 0 1 1083.72 1050.60L1073.00 1050.60A5.4 5.4 0 0 0 1068.32 1058.70z" fill="#ea4335"/><path d="M1073.00 1050.60L1083.72 1050.60A12 12 0 0 1 1072.32 1067.98L1077.68 1058.70A5.4 5.4 0 0 0 1073.00 1050.60z" fill="#fbc116"/><path d="M1077.68 1058.70L1072.32 1067.98A12 12 0 0 1 1062.97 1049.42L1068.32 1058.70A5.4 5.4 0 0 0 1077.68 1058.70z" fill="#2da94f"/><circle cx="1073" cy="1056" r="5.4" fill="#fff"/><circle cx="1073" cy="1056" r="4.3" fill="#3b82f0"/></g>
<circle cx="1082" cy="1047.200" r="8" fill="#c9185f"/><text x="1082" y="1051.300" font-family="Liberation Sans,sans-serif" font-size="11" fill="#fff" text-anchor="middle">S</text>
<rect x="1065.300" y="1072" width="16" height="3" rx="1.500" fill="#4cc2ff"/>
<rect x="1105" y="1047" width="24" height="18" rx="1" fill="#dfe8f1" stroke="#b8c4d0" stroke-width="1"/><path d="M1106 1062l2-2 2-1 2-7 1.500 4 2 2 2 1 2.500-1 2-8 1.500 5 2 5 1.500 1v2H1106z" fill="#7cc4f0" stroke="#3d9be0" stroke-width=".8"/>
<rect x="1149.500" y="1046.800" width="21.500" height="17.500" rx=".8" fill="#000" stroke="#8a8a8a" stroke-width="1"/><rect x="1150" y="1047.300" width="20.500" height="2.200" fill="#b8b8b8"/><text x="1151.500" y="1056.500" font-family="Liberation Mono,monospace" font-size="6" font-weight="700" fill="#fff">C:\_</text>
<path d="M1197 1045c-4 1-4.500 6-3.500 10 1 4 3 7 5 6.500 1.500-.4 1.500-2.500 2.500-2.500s1 2 1.500 5c.4 2.500 1.500 4 3.500 4s3-1.500 3-4c0-2 .5-3 2-3.500 3-.8 5-4 5-8 .2-4-1.500-7.500-6-8-2.500-.3-4 .8-5 .8s-3.500-1.500-8-.3z" fill="#3d74a6" stroke="#e8eef5" stroke-width="1.200"/><path d="M1205 1047c2 3 2 8 1 12M1201 1052c-.5 2 0 4 1 5" fill="none" stroke="#e8eef5" stroke-width="1"/>
<path d="M1254 1044.500 1261.500 1048V1064.500L1254 1068 1240.500 1055.500 1254 1044.500z" fill="#1f9cf0"/><path d="M1254 1044.500V1068l7.500-3.500V1048z" fill="#0a6fc2"/><path d="M1236.500 1050.500 1239 1048.500 1254 1061.500V1068zM1236.500 1062 1239 1064 1254 1051V1044.500z" fill="#2aa8f5"/><path d="M1254 1051.500 1247.500 1056.300 1254 1061z" fill="#1c1c1c"/>
<rect x="1246" y="1072" width="6.5" height="3" rx="1.500" fill="#8c8c8c"/>
<path d="M1281 1046 1297 1044 1304.500 1051 1305 1064 1294 1068.500 1282 1066z" fill="url(#pyc)"/><rect x="1285.500" y="1049" width="14.500" height="14.500" fill="#000"/><text x="1287" y="1057.300" font-family="Liberation Sans,sans-serif" font-size="7.500" font-weight="700" fill="#fff">PC</text><rect x="1287.200" y="1060" width="5" height="1.100" fill="#fff"/>
<g transform="rotate(45 1337.300 1056.200)"><rect x="1328.800" y="1047.700" width="8" height="8" rx="1" fill="#ea6a6c"/><rect x="1337.800" y="1047.700" width="8" height="8" rx="1" fill="#7cc860"/><rect x="1328.800" y="1056.700" width="8" height="8" rx="1" fill="#6ea4f2"/><rect x="1337.800" y="1056.700" width="8" height="8" rx="1" fill="#f8d468"/></g><path d="M1335.500 1048.500 1337.300 1062M1337.300 1054 1342 1056.500" stroke="#1c1c1c" stroke-width="1.300" fill="none"/><circle cx="1337.300" cy="1062" r="1.500" fill="#1c1c1c"/><circle cx="1342" cy="1056.500" r="1.500" fill="#1c1c1c"/>
<rect x="1368.600" y="1044" width="24.500" height="24.300" fill="#fff"/><rect x="1373.500" y="1047.500" width="14.500" height="9.500" rx="1.500" fill="#e8f2fa" stroke="#2a7ab8" stroke-width="1.300"/><path d="M1378.500 1057h4.500v2.300h2.500v1.200h-9.500v-1.200h2.500z" fill="#2a7ab8"/><circle cx="1378" cy="1052" r="1.800" fill="#3aa84a"/><rect x="1381" y="1050.500" width="5" height="3.300" fill="#5a9ad0"/><text x="1380.800" y="1065.500" font-family="Liberation Sans,sans-serif" font-size="4.300" fill="#6a7a88" text-anchor="middle">TaskPro</text>
<rect x="1377.5" y="1072" width="6.5" height="3" rx="1.500" fill="#8c8c8c"/>
<path d="M1417 1044H1429L1435 1050V1066A2 2 0 0 1 1433 1068H1417A2 2 0 0 1 1415 1066V1046A2 2 0 0 1 1417 1044z" fill="url(#lo)"/><path d="M1429 1044 1435 1050 1435 1044.800A.8.800 0 0 0 1434.200 1044z" fill="#6cc4f5"/><path d="M1429 1044V1048.500A1.500 1.500 0 0 0 1430.500 1050H1435z" fill="#0b4a9a"/><path d="M1419 1054.500H1424M1419 1057H1424M1419 1059.800H1431M1419 1062.500H1424" stroke="#fff" stroke-width="1.200"/><rect x="1426" y="1053.800" width="5" height="3.800" fill="none" stroke="#fff" stroke-width="1"/>
<rect x="1421.5" y="1072" width="6.5" height="3" rx="1.500" fill="#8c8c8c"/>
<path d="M1672.300 1058.500 1677.300 1053.500 1682.300 1058.500" fill="none" stroke="#fff" stroke-width="1.300"/>
<path d="M1704.500 1060.700A3.600 3.600 0 0 1 1704 1053.600 4.600 4.600 0 0 1 1712.600 1053 3.900 3.900 0 0 1 1713.500 1060.700z" fill="#d8d8d8"/><path d="M1703 1058.500 1712.500 1053 1716.500 1056.500 1708 1060.700H1704.500z" fill="#a8a8a8" opacity=".7"/>
<rect x="1732.800" y="1050.800" width="15.800" height="10" rx="1.500" fill="none" stroke="#fff" stroke-width="1.100"/><path d="M1735.300 1053.800h1.400M1738 1053.800h1.400M1740.700 1053.800h1.400M1743.400 1053.800h1.400M1745.700 1053.800h.8M1735.300 1056h1.400M1738 1056h1.400M1740.700 1056h1.400M1743.400 1056h1.400M1736.500 1058.400H1745" stroke="#fff" stroke-width="1.100"/>
<path d="M1765.300 1054.300A11 11 0 0 1 1780.700 1054.300M1767.800 1057A7.400 7.400 0 0 1 1778.200 1057M1770.300 1059.600A3.800 3.800 0 0 1 1775.700 1059.600" fill="none" stroke="#fff" stroke-width="1.300"/><circle cx="1773" cy="1061.300" r="1" fill="#fff"/>
<path d="M1789.500 1053.800H1792L1795.500 1050.500V1061.800L1792 1058.500H1789.500z" fill="none" stroke="#fff" stroke-width="1.100" stroke-linejoin="round"/><path d="M1798 1053.500A3.300 3.300 0 0 1 1798 1058.800M1800.300 1051.300A6.400 6.400 0 0 1 1800.300 1061M1802.600 1049.500A9.200 9.200 0 0 1 1802.600 1062.800" fill="none" stroke="#fff" stroke-width="1.100"/>
<path d="M1886 1060.500C1887.500 1059 1887.300 1057 1887.300 1055A5.200 5.200 0 0 1 1897.700 1055C1897.700 1057 1897.500 1059 1899 1060.500z" fill="#6dcbf2"/><path d="M1890.300 1061.800A2.300 2.300 0 0 0 1894.700 1061.800z" fill="#6dcbf2"/>
</svg>
<div class="t tk" id="kt1" style="top:1043px;left:51px;letter-spacing:-0.667px">78°F</div>
<div class="t tk" id="kt2" style="top:1058px;color:#d6d6d6;left:50px;letter-spacing:0.182px">Mostly sunny</div>
<div class="t tk" id="kt3" style="top:1050px;font-size:14px;color:#dcdcdc;left:558px;letter-spacing:-0.6px">Search</div>
<div class="t tk" id="kt4" style="top:1043px;left:1834px;letter-spacing:-0.167px">5:00 PM</div>
<div class="t tk" id="kt5" style="top:1059px;left:1822px;letter-spacing:0.25px">12/4/2025</div>


</body>
</html>
